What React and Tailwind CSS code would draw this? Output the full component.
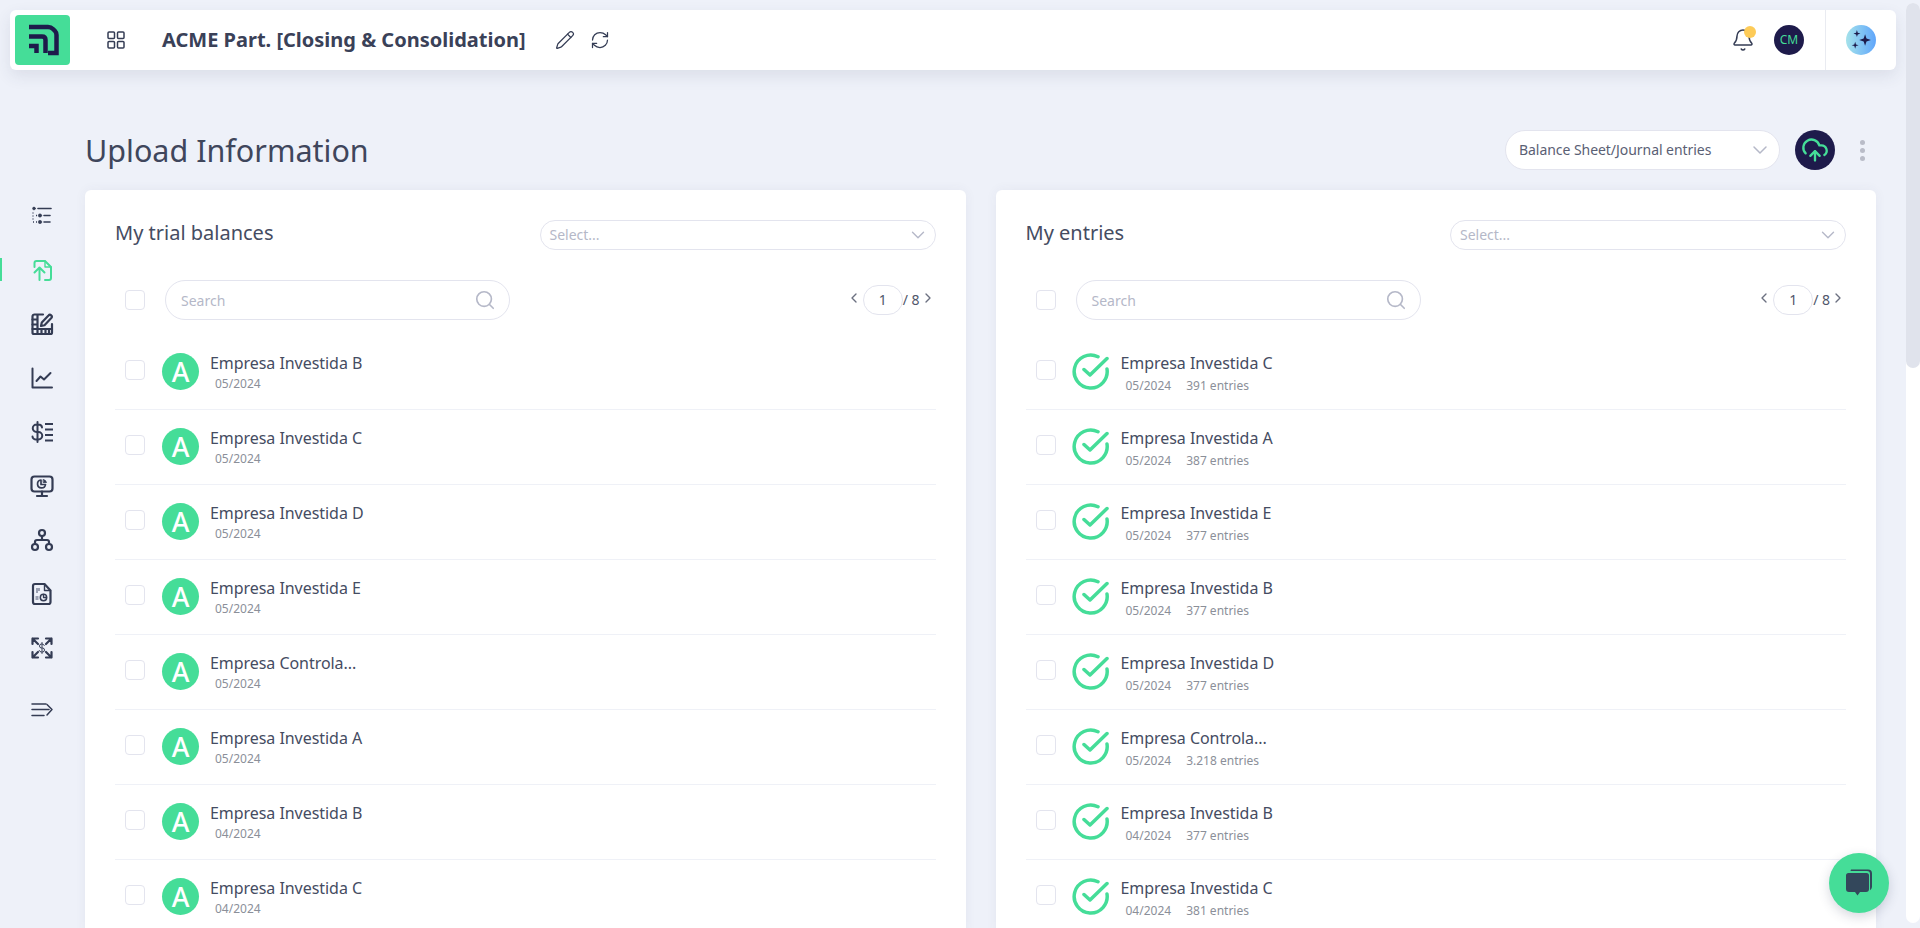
import React from "react";
import { Pencil, RefreshCw, Bell, Search, ChevronDown, ChevronLeft, ChevronRight, CloudUpload } from "lucide-react";

const navy = "#1e1b4b";
const ink = "#343c54";
const green = "#45dd98";

function Ico({ children, color = ink, sw = 2 }) {
  return (
    <svg width="24" height="24" viewBox="0 0 24 24" fill="none" stroke={color} strokeWidth={sw} strokeLinecap="round" strokeLinejoin="round">
      {children}
    </svg>
  );
}

const sideIcons = [
  <Ico key="1">
    <circle cx="4" cy="4.5" r="1.4" fill={ink} strokeWidth="0.6" />
    <path d="M8 4.5H21" strokeWidth="1.6" />
    <path d="M3 8.5v1M3 11.5v1M3 14.5v1M3 18h1M6 11.5h1M6 18h1" strokeWidth="1.3" strokeLinecap="butt" />
    <circle cx="10" cy="11.5" r="1.7" fill={ink} strokeWidth="0.5" />
    <circle cx="10" cy="18" r="1.7" fill={ink} strokeWidth="0.5" />
    <path d="M14 11.5H20M14 18H20" strokeWidth="1.6" />
  </Ico>,
  <Ico key="2" color={green}>
    <path d="M4.5 9V5a2 2 0 0 1 2-2h8.5l6 6v11a2 2 0 0 1-2 2h-4" />
    <path d="M15 3v6h6" strokeWidth="1.4" />
    <path d="M9.5 22V10M4.5 14.5l5-5 5 5" />
  </Ico>,
  <Ico key="3" sw={2.2}>
    <path d="M13 2.5H4.5a2 2 0 0 0-2 2v16a1.5 1.5 0 0 0 1.5 1.5h16.500a1.500 1.500 0 0 0 1.500-1.500V12" />
    <path d="M2.500 7.500h5M2.500 12.500h5M2.500 17h19.500M7.500 3v18M11.500 17v5M15.500 17v5M19 17v5" />
    <path d="M11 14l.8-3.500L18.500 3.500a1.800 1.800 0 0 1 2.800 2.500l-6.800 7.200z" />
  </Ico>,
  <Ico key="4">
    <path d="M2.500 2.500V21.500H22" />
    <path d="M6.500 15l4-4.500 3.500 3 6.500-6.500" />
  </Ico>,
  <Ico key="5">
    <path d="M12 7.500A3.500 3 0 0 0 8.500 4.500H6.500a3.500 3.500 0 0 0 0 7.500h2a3.500 3.500 0 0 1 0 7.500H6.500A3.500 3 0 0 1 2.500 16.500M7.500 2v20" strokeWidth="2" />
    <path d="M15 4H23M15 9.500H23M15 15H23M15 20.500H23" strokeWidth="2.2" strokeLinecap="butt" />
  </Ico>,
  <Ico key="6" sw={2.2}>
    <rect x="1.500" y="2.500" width="21" height="15" rx="3" />
    <path d="M12 17.500V22M7 22h10" />
    <path d="M11 6a4 4 0 1 0 4.500 4.500H11z" strokeWidth="1.700" />
    <path d="M13.500 5.500a4 4 0 0 1 3 3h-3z" fill={ink} strokeWidth="0.800" />
  </Ico>,
  <Ico key="7" sw={2.2}>
    <circle cx="12" cy="5" r="3" />
    <circle cx="5" cy="19" r="3" />
    <circle cx="19" cy="19" r="3" />
    <path d="M12 8v4M5 16v-2a2 2 0 0 1 2-2h10a2 2 0 0 1 2 2v2" />
  </Ico>,
  <Ico key="8" sw={2.2}>
    <path d="M5 2h9.500l6 6.500V20a2 2 0 0 1-2 2H5a2 2 0 0 1-2-2V4a2 2 0 0 1 2-2z" />
    <path d="M14.500 2v6.500h6" strokeWidth="1.400" />
    <path d="M6 6h4v3H8v2H6zM5.500 14h3v4h-3z" fill="#9aa0b2" stroke="none" />
    <circle cx="13.500" cy="15.500" r="3.200" strokeWidth="1.500" />
    <path d="M13.500 12.500v3H16.500" strokeWidth="1.300" />
  </Ico>,
  <Ico key="9" sw={2.2}>
    <path d="M8 8L2.500 2.500M2.500 8V2.500H8M16 8l5.500-5.500M16 2.500h5.500V8M8 16l-5.500 5.500M2.500 16v5.500H8M16 16l5.500 5.500M21.500 16v5.500H16" />
    <path d="M14.300 9.500A2.400 2.200 0 0 0 12 8h-.500a2 2 0 0 0 0 4h1a2 2 0 0 1 0 4h-1a2.400 2.200 0 0 1-2.300-1.500M12 6.500v11" strokeWidth="1" />
  </Ico>,
  <Ico key="10" sw={1.500}>
    <path d="M2 6H16M2 11.500H19M2 17.500H14" />
    <path d="M17 6.500l5 5-5 5.500" />
  </Ico>,
];

const left = [
  ["Empresa Investida B", "05/2024"],
  ["Empresa Investida C", "05/2024"],
  ["Empresa Investida D", "05/2024"],
  ["Empresa Investida E", "05/2024"],
  ["Empresa Controla...", "05/2024"],
  ["Empresa Investida A", "05/2024"],
  ["Empresa Investida B", "04/2024"],
  ["Empresa Investida C", "04/2024"],
];
const right = [
  ["Empresa Investida C", "05/2024", "391 entries"],
  ["Empresa Investida A", "05/2024", "387 entries"],
  ["Empresa Investida E", "05/2024", "377 entries"],
  ["Empresa Investida B", "05/2024", "377 entries"],
  ["Empresa Investida D", "05/2024", "377 entries"],
  ["Empresa Controla...", "05/2024", "3.218 entries"],
  ["Empresa Investida B", "04/2024", "377 entries"],
  ["Empresa Investida C", "04/2024", "381 entries"],
];

function Check() {
  return <span className="block w-5 h-5 shrink-0 rounded-[4px] border border-[#e3e4ee] bg-white" />;
}

function StatusA() {
  return (
    <span className="flex w-[37px] h-[37px] shrink-0 items-center justify-center rounded-full bg-[#45dd98] text-white text-[27px] leading-none font-medium">
      A
    </span>
  );
}

function StatusCheck() {
  return (
    <svg width="37" height="37" viewBox="0 0 37 37" fill="none" stroke={green} strokeWidth="3.500" strokeLinecap="round" strokeLinejoin="round" className="shrink-0 -ml-[1px] mr-[1px]">
      <path d="M26 3.700A16.500 16.500 0 1 0 35 16" />
      <path d="M12 16.500l6 5.500L35 5.500" />
    </svg>
  );
}

function Row({ item, status }) {
  return (
    <div className="flex h-[75px] shrink-0 items-start border-b border-[#eff1f7] pl-[10px]">
      <div className="mt-[25px]">
        <Check />
      </div>
      <div className="ml-[17px] mt-[18px]">{status}</div>
      <div className="ml-[11px] mt-[15px] min-w-0">
        <div className="text-base leading-[26px] tracking-[-0.05px] text-[#454c62]">{item[0]}</div>
        <div className={`ml-[5px] flex gap-[15px] text-xs leading-[16px] text-[#8b8f99] ${item[2] ? "mt-[2px]" : ""}`}>
          <span>{item[1]}</span>
          {item[2] && <span>{item[2]}</span>}
        </div>
      </div>
    </div>
  );
}

function Card({ title, rows, status }) {
  return (
    <section className="flex-1 min-w-0 rounded-t-[6px] bg-white px-[30px] pt-[30px] shadow-[0_0_12px_rgba(60,70,110,0.06)]">
      <div className="flex h-[30px] items-center justify-between">
        <h2 className="-mt-[4px] text-xl leading-[30px] font-normal text-[#454c62]">{title}</h2>
        <div className="flex h-[30px] w-[396px] items-center justify-between rounded-full border border-[#e3e4ee] pl-[9px] pr-[6px]">
          <span className="text-sm text-[#b5b8c8]">Select...</span>
          <ChevronDown size={22} strokeWidth={1.5} color="#b5b8c8" />
        </div>
      </div>
      <div className="mt-[30px] flex h-[40px] items-center pl-[10px]">
        <Check />
        <div className="ml-[20px] flex h-[40px] w-[345px] items-center justify-between rounded-full border border-[#e3e4ee] pl-[15px] pr-[13px]">
          <span className="mt-[1px] text-sm text-[#b5b8c8]">Search</span>
          <Search size={22} strokeWidth={1.8} color="#b5b8c8" />
        </div>
        <div className="ml-auto flex items-center text-sm text-[#50566a]">
          <ChevronLeft size={16} className="-mt-[5px] mr-[1px]" color="#6b7080" />
          <span className="flex h-[30px] w-[40px] items-center justify-center rounded-full border border-[#e3e4ee] text-[#50566a]">1</span>
          <span>/ 8</span>
          <ChevronRight size={16} className="-mt-[5px]" color="#6b7080" />
        </div>
      </div>
      <div className="mt-[15px] flex flex-col">
        {rows.map((r, i) => (
          <Row key={i} item={r} status={status} />
        ))}
      </div>
    </section>
  );
}

export default function App() {
  return (
    <div className="relative flex h-screen flex-col overflow-hidden bg-[#eef1f9] font-['Noto_Sans','Open_Sans',sans-serif]">
      <header className="ml-[10px] mr-[24px] mt-[10px] flex h-[60px] shrink-0 items-center rounded-[6px] bg-white pl-[5px] shadow-[0_6px_16px_rgba(50,60,90,0.1)]">
        <span className="flex h-[50px] w-[55px] items-center justify-center rounded-[4px] bg-[#45dd98]">
          <svg width="55" height="50" viewBox="0 0 55 50" fill="none" stroke={navy} strokeWidth="4.500">
            <path d="M14 12H33Q36 12 38 14L40 16Q41.500 17.500 41.500 20V38H33" />
            <path d="M14 21.500H27Q30.500 21.500 30.500 25V38" />
            <path d="M14 31H21.500V38" />
          </svg>
        </span>
        <svg width="20" height="20" viewBox="0 0 20 20" fill="none" stroke={ink} strokeWidth="1.500" className="ml-[36px]">
          <rect x="2" y="2" width="6.500" height="6.500" rx="1" />
          <rect x="11.500" y="2" width="6.500" height="6.500" rx="1" />
          <rect x="2" y="11.500" width="6.500" height="6.500" rx="1" />
          <rect x="11.500" y="11.500" width="6.500" height="6.500" rx="1" />
        </svg>
        <h1 className="ml-[36px] text-xl leading-none font-bold text-[#3a4158]">ACME Part. [Closing &amp; Consolidation]</h1>
        <Pencil size={20} strokeWidth={1.5} color={ink} className="ml-[29px]" />
        <RefreshCw size={20} strokeWidth={1.5} color={ink} className="ml-[15px]" />
        <div className="ml-auto flex h-full items-center">
          <span className="relative mr-[19px] block">
            <Bell size={24} strokeWidth={1.5} color={ink} />
            <span className="absolute -right-[1px] -top-[2px] h-3 w-3 rounded-full bg-[#fdcb58]" />
          </span>
          <span className="flex h-[30px] w-[30px] items-center justify-center rounded-full bg-[#1e1b4b] text-xs text-[#45dd98]">CM</span>
          <span className="ml-[21px] h-full w-px bg-[#e9ebf1]" />
          <span className="ml-[20px] mr-[20px] flex h-[30px] w-[30px] items-center justify-center rounded-full bg-gradient-to-r from-[#a5e2ea] to-[#60a5fa]">
            <svg width="28" height="28" viewBox="0 0 24 24" fill={navy}>
              <path d="M15.500 7l1.200 3.800 3.800 1.200-3.800 1.200-1.200 3.800-1.200-3.800-3.800-1.200 3.800-1.200z" />
              <path d="M8.500 3.500l.7 2.300 2.300.7-2.300.7-.7 2.300-.7-2.300-2.300-.7 2.300-.7z" />
              <path d="M7 13.500l.7 2.300 2.300.7-2.300.7-.7 2.300-.7-2.300-2.300-.7 2.300-.7z" />
            </svg>
          </span>
        </div>
      </header>

      <div className="flex min-h-0 flex-1">
        <aside className="relative w-[85px] shrink-0 pt-[119px]">
          <div className="flex flex-col items-center pr-[1px]">
            {sideIcons.map((icon, i) => (
              <div key={i} className={`relative flex w-full items-center justify-center ${i === 8 ? "mb-[8px] h-[54px]" : "h-[54px]"}`}>
                {i === 1 && <span className="absolute left-0 top-[15px] h-[23px] w-[2px] bg-[#45dd98]" />}
                {icon}
              </div>
            ))}
          </div>
        </aside>

        <main className="min-w-0 flex-1 pr-[44px] pt-[60px]">
          <div className="flex h-[40px] items-center justify-between">
            <h1 className="text-[30.5px] leading-none font-normal text-[#3f465c]">Upload Information</h1>
            <div className="flex items-center">
              <div className="flex h-[40px] w-[275px] items-center justify-between rounded-full border border-[#e3e4ee] bg-white pl-[13px] pr-[7px]">
                <span className="text-sm tracking-[-0.05px] text-[#5a6074]">Balance Sheet/Journal entries</span>
                <ChevronDown size={24} strokeWidth={1.5} color="#b5b8c8" />
              </div>
              <span className="ml-[15px] flex h-[40px] w-[40px] items-center justify-center rounded-full bg-[#1e1b4b]">
                <CloudUpload size={28} strokeWidth={2} color={green} />
              </span>
              <span className="ml-[25px] mr-[11px] flex flex-col gap-[3px]">
                <span className="h-[5px] w-[5px] rounded-full bg-[#b9bcc8]" />
                <span className="h-[5px] w-[5px] rounded-full bg-[#b9bcc8]" />
                <span className="h-[5px] w-[5px] rounded-full bg-[#b9bcc8]" />
              </span>
            </div>
          </div>
          <div className="mt-[20px] flex gap-[30px]">
            <Card title="My trial balances" rows={left} status={<StatusA />} />
            <Card title="My entries" rows={right} status={<StatusCheck />} />
          </div>
        </main>
      </div>

      <div className="absolute bottom-[5px] right-0 top-[3px] w-[14px] overflow-hidden rounded-[7px] bg-white">
        <div className="h-[365px] rounded-b-[7px] bg-[#e0e3ec]" />
      </div>

      <button className="absolute bottom-[15px] right-[31px] flex h-[60px] w-[60px] items-center justify-center rounded-full bg-[#45dd98] shadow-[0_4px_12px_rgba(50,60,90,0.2)]">
        <svg width="32" height="32" viewBox="0 0 32 32" fill="#33475b">
          <path d="M8 2.500h17a4 4 0 0 1 4 4V20a4 4 0 0 1-2 3.200V7a3 3 0 0 0-3-3H7.500z" />
          <path d="M5.500 6h18a2.500 2.500 0 0 1 2.500 2.500V22a3 3 0 0 1-3 3h-6l-2.500 3.500L12 25H6a3 3 0 0 1-3-3V8.500A2.500 2.500 0 0 1 5.500 6z" />
        </svg>
      </button>
    </div>
  );
}
